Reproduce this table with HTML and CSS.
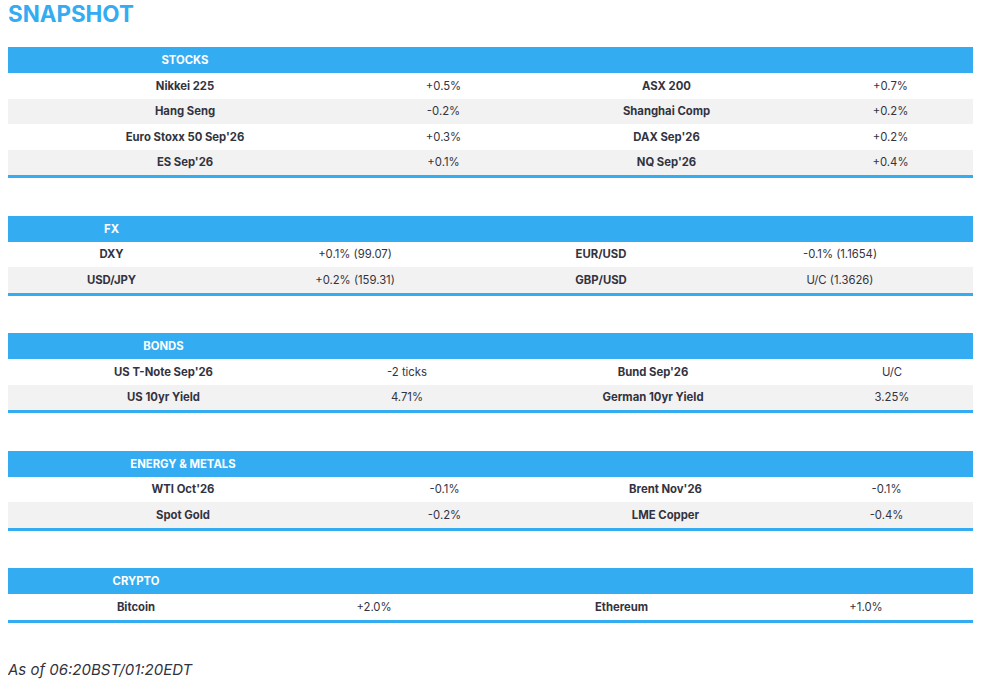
FILE: index.html
```html
<!DOCTYPE html>
<html lang="en">
<head>
<meta charset="utf-8">
<title>Snapshot</title>
<link rel="stylesheet" href="styles.css">
</head>
<body>
<main class="snapshot">
  <h2 class="title">SNAPSHOT</h2>

  <table class="snap stocks">
    <colgroup><col class="c1"><col class="c2"><col class="c3"><col class="c4"></colgroup>
    <thead><tr><th>STOCKS</th><th></th><th></th><th></th></tr></thead>
    <tbody>
      <tr><td class="lbl">Nikkei 225</td><td>+0.5%</td><td class="lbl">ASX 200</td><td>+0.7%</td></tr>
      <tr><td class="lbl">Hang Seng</td><td>-0.2%</td><td class="lbl">Shanghai Comp</td><td>+0.2%</td></tr>
      <tr><td class="lbl">Euro Stoxx 50 Sep'26</td><td>+0.3%</td><td class="lbl">DAX Sep'26</td><td>+0.2%</td></tr>
      <tr><td class="lbl">ES Sep'26</td><td>+0.1%</td><td class="lbl">NQ Sep'26</td><td>+0.4%</td></tr>
    </tbody>
  </table>

  <table class="snap fx">
    <colgroup><col class="c1"><col class="c2"><col class="c3"><col class="c4"></colgroup>
    <thead><tr><th>FX</th><th></th><th></th><th></th></tr></thead>
    <tbody>
      <tr><td class="lbl">DXY</td><td>+0.1% (99.07)</td><td class="lbl">EUR/USD</td><td>-0.1% (1.1654)</td></tr>
      <tr><td class="lbl">USD/JPY</td><td>+0.2% (159.31)</td><td class="lbl">GBP/USD</td><td>U/C (1.3626)</td></tr>
    </tbody>
  </table>

  <table class="snap bonds">
    <colgroup><col class="c1"><col class="c2"><col class="c3"><col class="c4"></colgroup>
    <thead><tr><th>BONDS</th><th></th><th></th><th></th></tr></thead>
    <tbody>
      <tr><td class="lbl">US T-Note Sep'26</td><td>-2 ticks</td><td class="lbl">Bund Sep'26</td><td>U/C</td></tr>
      <tr><td class="lbl">US 10yr Yield</td><td>4.71%</td><td class="lbl">German 10yr Yield</td><td>3.25%</td></tr>
    </tbody>
  </table>

  <table class="snap energy">
    <colgroup><col class="c1"><col class="c2"><col class="c3"><col class="c4"></colgroup>
    <thead><tr><th>ENERGY &amp; METALS</th><th></th><th></th><th></th></tr></thead>
    <tbody>
      <tr><td class="lbl">WTI Oct'26</td><td>-0.1%</td><td class="lbl">Brent Nov'26</td><td>-0.1%</td></tr>
      <tr><td class="lbl">Spot Gold</td><td>-0.2%</td><td class="lbl">LME Copper</td><td>-0.4%</td></tr>
    </tbody>
  </table>

  <table class="snap crypto">
    <colgroup><col class="c1"><col class="c2"><col class="c3"><col class="c4"></colgroup>
    <thead><tr><th>CRYPTO</th><th></th><th></th><th></th></tr></thead>
    <tbody>
      <tr><td class="lbl">Bitcoin</td><td>+2.0%</td><td class="lbl">Ethereum</td><td>+1.0%</td></tr>
    </tbody>
  </table>

  <p class="asof">As of 06:20BST/01:20EDT</p>
</main>
</body>
</html>
```

FILE: styles.css
```css
html, body {
  background: #ffffff;
}
body {
  margin: 0 10px 0 8px;
  font-family: Inter, "Noto Sans", "Liberation Sans", sans-serif;
  color: #333340;
}
.snapshot {
  display: flex;
  flex-direction: column;
}
.title {
  margin: 0 0 19px 0;
  font-size: 22.4px;
  line-height: 28px;
  font-weight: 700;
  color: #33acf2;
}
.snap {
  width: 100%;
  table-layout: fixed;
  border-collapse: collapse;
  border-spacing: 0;
  margin: 0 0 37.5px 0;
  font-size: 11.3px;
}
.snap th {
  background: #33acf2;
  color: #ffffff;
  font-weight: 700;
  height: 26px;
  padding: 0;
  text-align: center;
  vertical-align: middle;
}
.snap td {
  height: 25.5px;
  padding: 0;
  text-align: center;
  vertical-align: middle;
  font-weight: 400;
  color: #333340;
}
.snap td.lbl {
  font-weight: 700;
}
.snap tbody tr:nth-child(even) td {
  background: #f2f2f2;
}
.snap tbody tr:last-child td {
  border-bottom: 3px solid #33acf2;
  box-shadow: inset -1px 0 0 rgba(255, 255, 255, 0);
}

.stocks .c1 { width: 354px; }
.stocks .c2 { width: 163px; }
.stocks .c3 { width: 283px; }
.stocks .c4 { width: 165px; }

.fx .c1 { width: 207px; }
.fx .c2 { width: 280px; }
.fx .c3 { width: 212px; }
.fx .c4 { width: 266px; }

.bonds .c1 { width: 311px; }
.bonds .c2 { width: 176px; }
.bonds .c3 { width: 316px; }
.bonds .c4 { width: 162px; }

.energy .c1 { width: 350px; }
.energy .c2 { width: 173px; }
.energy .c3 { width: 269px; }
.energy .c4 { width: 173px; }

.crypto .c1 { width: 256px; }
.crypto .c2 { width: 220px; }
.crypto .c3 { width: 275px; }
.crypto .c4 { width: 214px; }

.asof {
  margin: 0;
  font-size: 15px;
  line-height: 19px;
  font-style: italic;
  color: #333340;
}
```
